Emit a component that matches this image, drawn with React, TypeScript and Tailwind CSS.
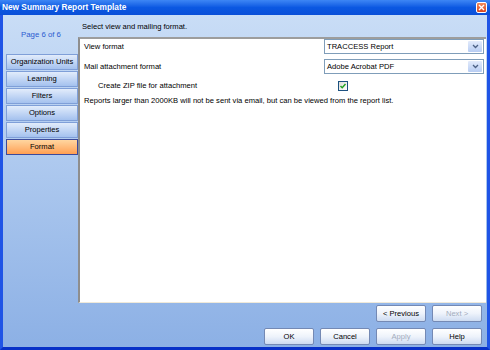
import React from 'react';

const tabs = ['Organization Units', 'Learning', 'Filters', 'Options', 'Properties', 'Format'];

const Btn: React.FC<{ label: string; disabled?: boolean }> = ({ label, disabled }) => (
  <div
    className={`w-[50px] h-[17px] flex items-center justify-center rounded-[2px] border border-[#7489b4] bg-gradient-to-b from-[#ffffff] via-[#eef3fb] to-[#cddbf1] text-[7.6px] ${
      disabled ? 'text-[#a3acbd]' : 'text-black'
    }`}
  >
    {label}
  </div>
);

const Select: React.FC<{ value: string }> = ({ value }) => (
  <div className="h-[15px] flex border border-[#7f9db9] bg-white">
    <div className="flex-1 flex items-center pl-[2px] text-[7.6px] text-black">{value}</div>
    <div className="w-[14px] m-px flex items-center justify-center rounded-[1px] bg-gradient-to-b from-[#e3ebfb] to-[#b8cdf3]">
      <svg width="7" height="5" viewBox="0 0 7 5">
        <path d="M1 1 L3.5 3.5 L6 1" fill="none" stroke="#4d6185" strokeWidth="1.3" />
      </svg>
    </div>
  </div>
);

export default function App() {
  return (
    <div className="w-[490px] h-[350px] flex flex-col overflow-hidden font-['Liberation_Sans',Arial,sans-serif]">
      {/* Title bar */}
      <div className="h-[15px] flex items-center justify-between pl-[2px] pr-[3px] bg-gradient-to-b from-[#3d86f5] via-[#0b58e2] to-[#0a4fd8]">
        <span className="text-white font-bold text-[8.3px] leading-none">New Summary Report Template</span>
        <div className="w-[11px] h-[11px] rounded-[2px] border border-white bg-gradient-to-b from-[#f08a5c] to-[#d8441e] flex items-center justify-center">
          <svg width="7" height="7" viewBox="0 0 7 7">
            <path d="M1 1 L6 6 M6 1 L1 6" stroke="white" strokeWidth="1.4" />
          </svg>
        </div>
      </div>

      {/* Body */}
      <div className="flex-1 flex flex-col border-l-[3px] border-r-[3px] border-b-[3px] border-l-[#1f54e6] border-r-[#1f54e6] border-b-[#0831c8] bg-gradient-to-b from-[#c9ddf6] to-[#8cb0e5]">
        <div className="h-[288px] flex">
          {/* Sidebar */}
          <div className="w-[75px] flex flex-col pl-[3px]">
            <div className="h-[39px] flex items-center justify-center pl-[2px] pr-[4px] pt-[1px] text-[7.8px] text-[#2d5bd0]">Page 6 of 6</div>
            <div className="flex flex-col gap-px w-[72px]">
              {tabs.map((t) => {
                const active = t === 'Format';
                return (
                  <div
                    key={t}
                    className={`h-[16px] flex items-center justify-center text-[7.6px] text-black border ${
                      active
                        ? 'border-[#3b4a9c] bg-gradient-to-b from-[#ffd6a0] to-[#ff9f52]'
                        : 'border-[#7f9fd8] bg-gradient-to-b from-[#e2ecfb] to-[#a4c1ee]'
                    }`}
                  >
                    {t}
                  </div>
                );
              })}
            </div>
          </div>

          {/* Content */}
          <div className="flex-1 flex flex-col pr-px">
            <div className="h-[22px] flex items-center pl-[4px] pt-[1px] text-[7.6px] text-black">
              Select view and mailing format.
            </div>
            <div className="flex-1 bg-white border-l-2 border-t-2 border-l-[#8e8e8e] border-t-[#9d9d9d] border-b border-b-[#efe9d9] pl-[4px] pr-[2px] flex flex-col text-[7.6px] text-black">
              <div className="grid grid-cols-[1fr_160px] gap-y-[5px] items-center">
                <span>View format</span>
                <Select value="TRACCESS Report" />
                <span>Mail attachment format</span>
                <Select value="Adobe Acrobat PDF" />
                <span className="pl-[14px] h-[13px] flex items-center">Create ZIP file for attachment</span>
                <div className="h-[13px] flex items-center pl-[14px]">
                  <div className="w-[10px] h-[10px] border border-[#1c5180] bg-gradient-to-br from-[#dcdcd7] to-white flex items-center justify-center">
                    <svg width="8" height="8" viewBox="0 0 8 8">
                      <path d="M1.5 4 L3.2 5.8 L6.5 2" fill="none" stroke="#21a121" strokeWidth="1.4" />
                    </svg>
                  </div>
                </div>
              </div>
              <div className="mt-[3px]">
                Reports larger than 2000KB will not be sent via email, but can be viewed from the report list.
              </div>
            </div>
          </div>
        </div>

        {/* Buttons */}
        <div className="flex-1 flex flex-col justify-center gap-[6px] pr-[5px]">
          <div className="flex justify-end gap-[6px]">
            <Btn label="< Previous" />
            <Btn label="Next >" disabled />
          </div>
          <div className="flex justify-end gap-[6px]">
            <Btn label="OK" />
            <Btn label="Cancel" />
            <Btn label="Apply" disabled />
            <Btn label="Help" />
          </div>
        </div>
      </div>
    </div>
  );
}
